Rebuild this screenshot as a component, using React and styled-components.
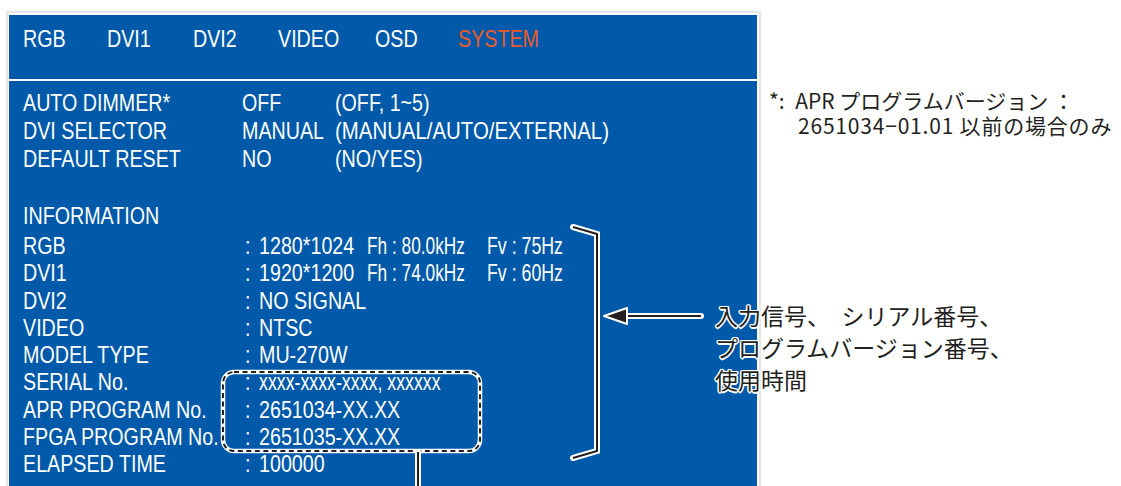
import React from "react";
import styled, { createGlobalStyle } from "styled-components";

const BLUE = "#0059a9";
const SANS = `"Liberation Sans", Arial, sans-serif`;
const JP = `"Noto Sans CJK JP", "Noto Sans", sans-serif`;

const GlobalStyle = createGlobalStyle`
  html, body { margin: 0; padding: 0; background: #fff; }
  * { box-sizing: border-box; }
`;

const Page = styled.div`
  position: relative;
  width: 1121px;
  height: 486px;
  overflow: hidden;
  display: flex;
  align-items: stretch;
  padding: 11px 0 0 6px;
  font-family: ${SANS};
`;

const Frame = styled.div`
  flex: none;
  width: 755px;
  display: flex;
  flex-direction: column;
  gap: 2px;
  border: 2px solid #e6e6e6;
  border-bottom: none;
  padding: 2px 2px 0 1px;
  background: #fff;
`;

/* condensed rendering of the OSD font (Arial Narrow look) */
const Narrow = styled.span`
  display: inline-block;
  white-space: nowrap;
  transform: scaleX(${(p) => p.$sx || 0.82});
  transform-origin: 0 50%;
`;

const TabBar = styled.div`
  flex: none;
  height: 64px;
  background: ${BLUE};
  display: grid;
  grid-template-columns: 84px 86px 85px 97px 83px auto;
  padding: 10px 0 0 14px;
`;

const Tab = styled.span`
  font-size: 24px;
  line-height: 28px;
  color: ${(p) => (p.$active ? "#ea5b2b" : "#fff")};
`;

const Body = styled.div`
  flex: 1;
  background: ${BLUE};
  color: #fff;
  padding: 8px 0 0 14px;
  font-size: 24px;
`;

const SettingRow = styled.div`
  display: grid;
  grid-template-columns: 219px 93px auto;
  height: 28px;
  line-height: 28px;
`;

const InfoHeading = styled.div`
  margin-top: 29px;
  margin-bottom: 2px;
  height: 28px;
  line-height: 28px;
`;

const InfoRow = styled.div`
  display: grid;
  grid-template-columns: 222px 14px auto;
  height: 27.25px;
  line-height: 27.25px;
`;

const Values = styled.span`
  display: flex;
`;

const Cell = styled.span`
  flex: none;
  width: ${(p) => (p.$w ? `${p.$w}px` : "auto")};
`;

const Aside = styled.div`
  margin: 77px 0 0 8px;
  font-family: ${JP};
  font-size: 21px;
  line-height: 25px;
  color: #231f20;
  white-space: nowrap;
`;

const AsideLine = styled.div`
  padding-left: ${(p) => p.$indent || 0}px;
  letter-spacing: ${(p) => p.$spacing || 0}px;
`;

const Overlay = styled.svg`
  position: absolute;
  left: 0;
  top: 0;
  pointer-events: none;
`;

const Callout = styled.div`
  position: absolute;
  left: 715px;
  top: 299px;
  font-family: ${JP};
  font-size: 23px;
  line-height: 32px;
  color: #231f20;
  white-space: nowrap;
  text-shadow:
    1.5px 0 0 #fff, -1.5px 0 0 #fff, 0 1.5px 0 #fff, 0 -1.5px 0 #fff,
    1px 1px 0 #fff, -1px -1px 0 #fff, 1px -1px 0 #fff, -1px 1px 0 #fff;
`;

const tabs = ["RGB", "DVI1", "DVI2", "VIDEO", "OSD", "SYSTEM"];

const settings = [
  ["AUTO DIMMER*", "OFF", "(OFF, 1~5)"],
  ["DVI SELECTOR", "MANUAL", "(MANUAL/AUTO/EXTERNAL)", 0.85],
  ["DEFAULT RESET", "NO", "(NO/YES)"],
];

// each value: [text, cell width (fixed columns), horizontal scale]
const info = [
  ["RGB", [["1280*1024", 108], ["Fh : 80.0kHz", 120, 0.72], ["Fv : 75Hz", 0, 0.74]]],
  ["DVI1", [["1920*1200", 108], ["Fh : 74.0kHz", 120, 0.72], ["Fv : 60Hz", 0, 0.74]]],
  ["DVI2", [["NO SIGNAL"]]],
  ["VIDEO", [["NTSC"]]],
  ["MODEL TYPE", [["MU-270W"]]],
  ["SERIAL No.", [["xxxx-xxxx-xxxx, xxxxxx", 0, 0.74]]],
  ["APR PROGRAM No.", [["2651034-XX.XX"]]],
  ["FPGA PROGRAM No.", [["2651035-XX.XX"]]],
  ["ELAPSED TIME", [["100000"]]],
];

function Line({ d, w = 2 }) {
  return (
    <>
      <path d={d} fill="none" stroke="#fff" strokeWidth={w + 4} strokeLinejoin="miter" strokeLinecap="round" />
      <path d={d} fill="none" stroke="#231f20" strokeWidth={w} strokeLinejoin="miter" />
    </>
  );
}

export default function App() {
  return (
    <>
      <GlobalStyle />
      <Page>
        <Frame>
          <TabBar>
            {tabs.map((t) => (
              <Tab key={t} $active={t === "SYSTEM"}>
                <Narrow>{t}</Narrow>
              </Tab>
            ))}
          </TabBar>
          <Body>
            {settings.map(([a, b, c, sx]) => (
              <SettingRow key={a}>
                <Narrow>{a}</Narrow>
                <Narrow>{b}</Narrow>
                <Narrow $sx={sx}>{c}</Narrow>
              </SettingRow>
            ))}
            <InfoHeading>
              <Narrow>INFORMATION</Narrow>
            </InfoHeading>
            {info.map(([label, vals]) => (
              <InfoRow key={label}>
                <Narrow>{label}</Narrow>
                <Narrow>:</Narrow>
                <Values>
                  {vals.map(([v, w, sx], i) => (
                    <Cell key={i} $w={w}>
                      <Narrow $sx={sx}>{v}</Narrow>
                    </Cell>
                  ))}
                </Values>
              </InfoRow>
            ))}
          </Body>
        </Frame>
        <Aside>
          <AsideLine>*:{"\u2002"}APR プログラムバージョン ：</AsideLine>
          <AsideLine $indent={29} $spacing={0.8}>2651034−01.01 以前の場合のみ</AsideLine>
        </Aside>

        <Overlay width="1121" height="486" viewBox="0 0 1121 486">
          <rect x="223" y="372" width="257" height="79" rx="11" fill="none" stroke="#fff" strokeWidth="4.5" />
          <rect x="223" y="372" width="257" height="79" rx="11" fill="none" stroke="#231f20" strokeWidth="2" strokeDasharray="5 3.5" />
          <Line d="M418 452 L418 490" />
          <Line d="M573 227 L597 234 L597 451 L573 458" />
          <Line d="M701 316 L622 316" />
          <polygon points="604,316 627,308 627,324" fill="#231f20" stroke="#fff" strokeWidth="2" strokeLinejoin="round" />
        </Overlay>

        <Callout>
          <div>入力信号、　シリアル番号、</div>
          <div>プログラムバージョン番号、</div>
          <div>使用時間</div>
        </Callout>
      </Page>
    </>
  );
}
